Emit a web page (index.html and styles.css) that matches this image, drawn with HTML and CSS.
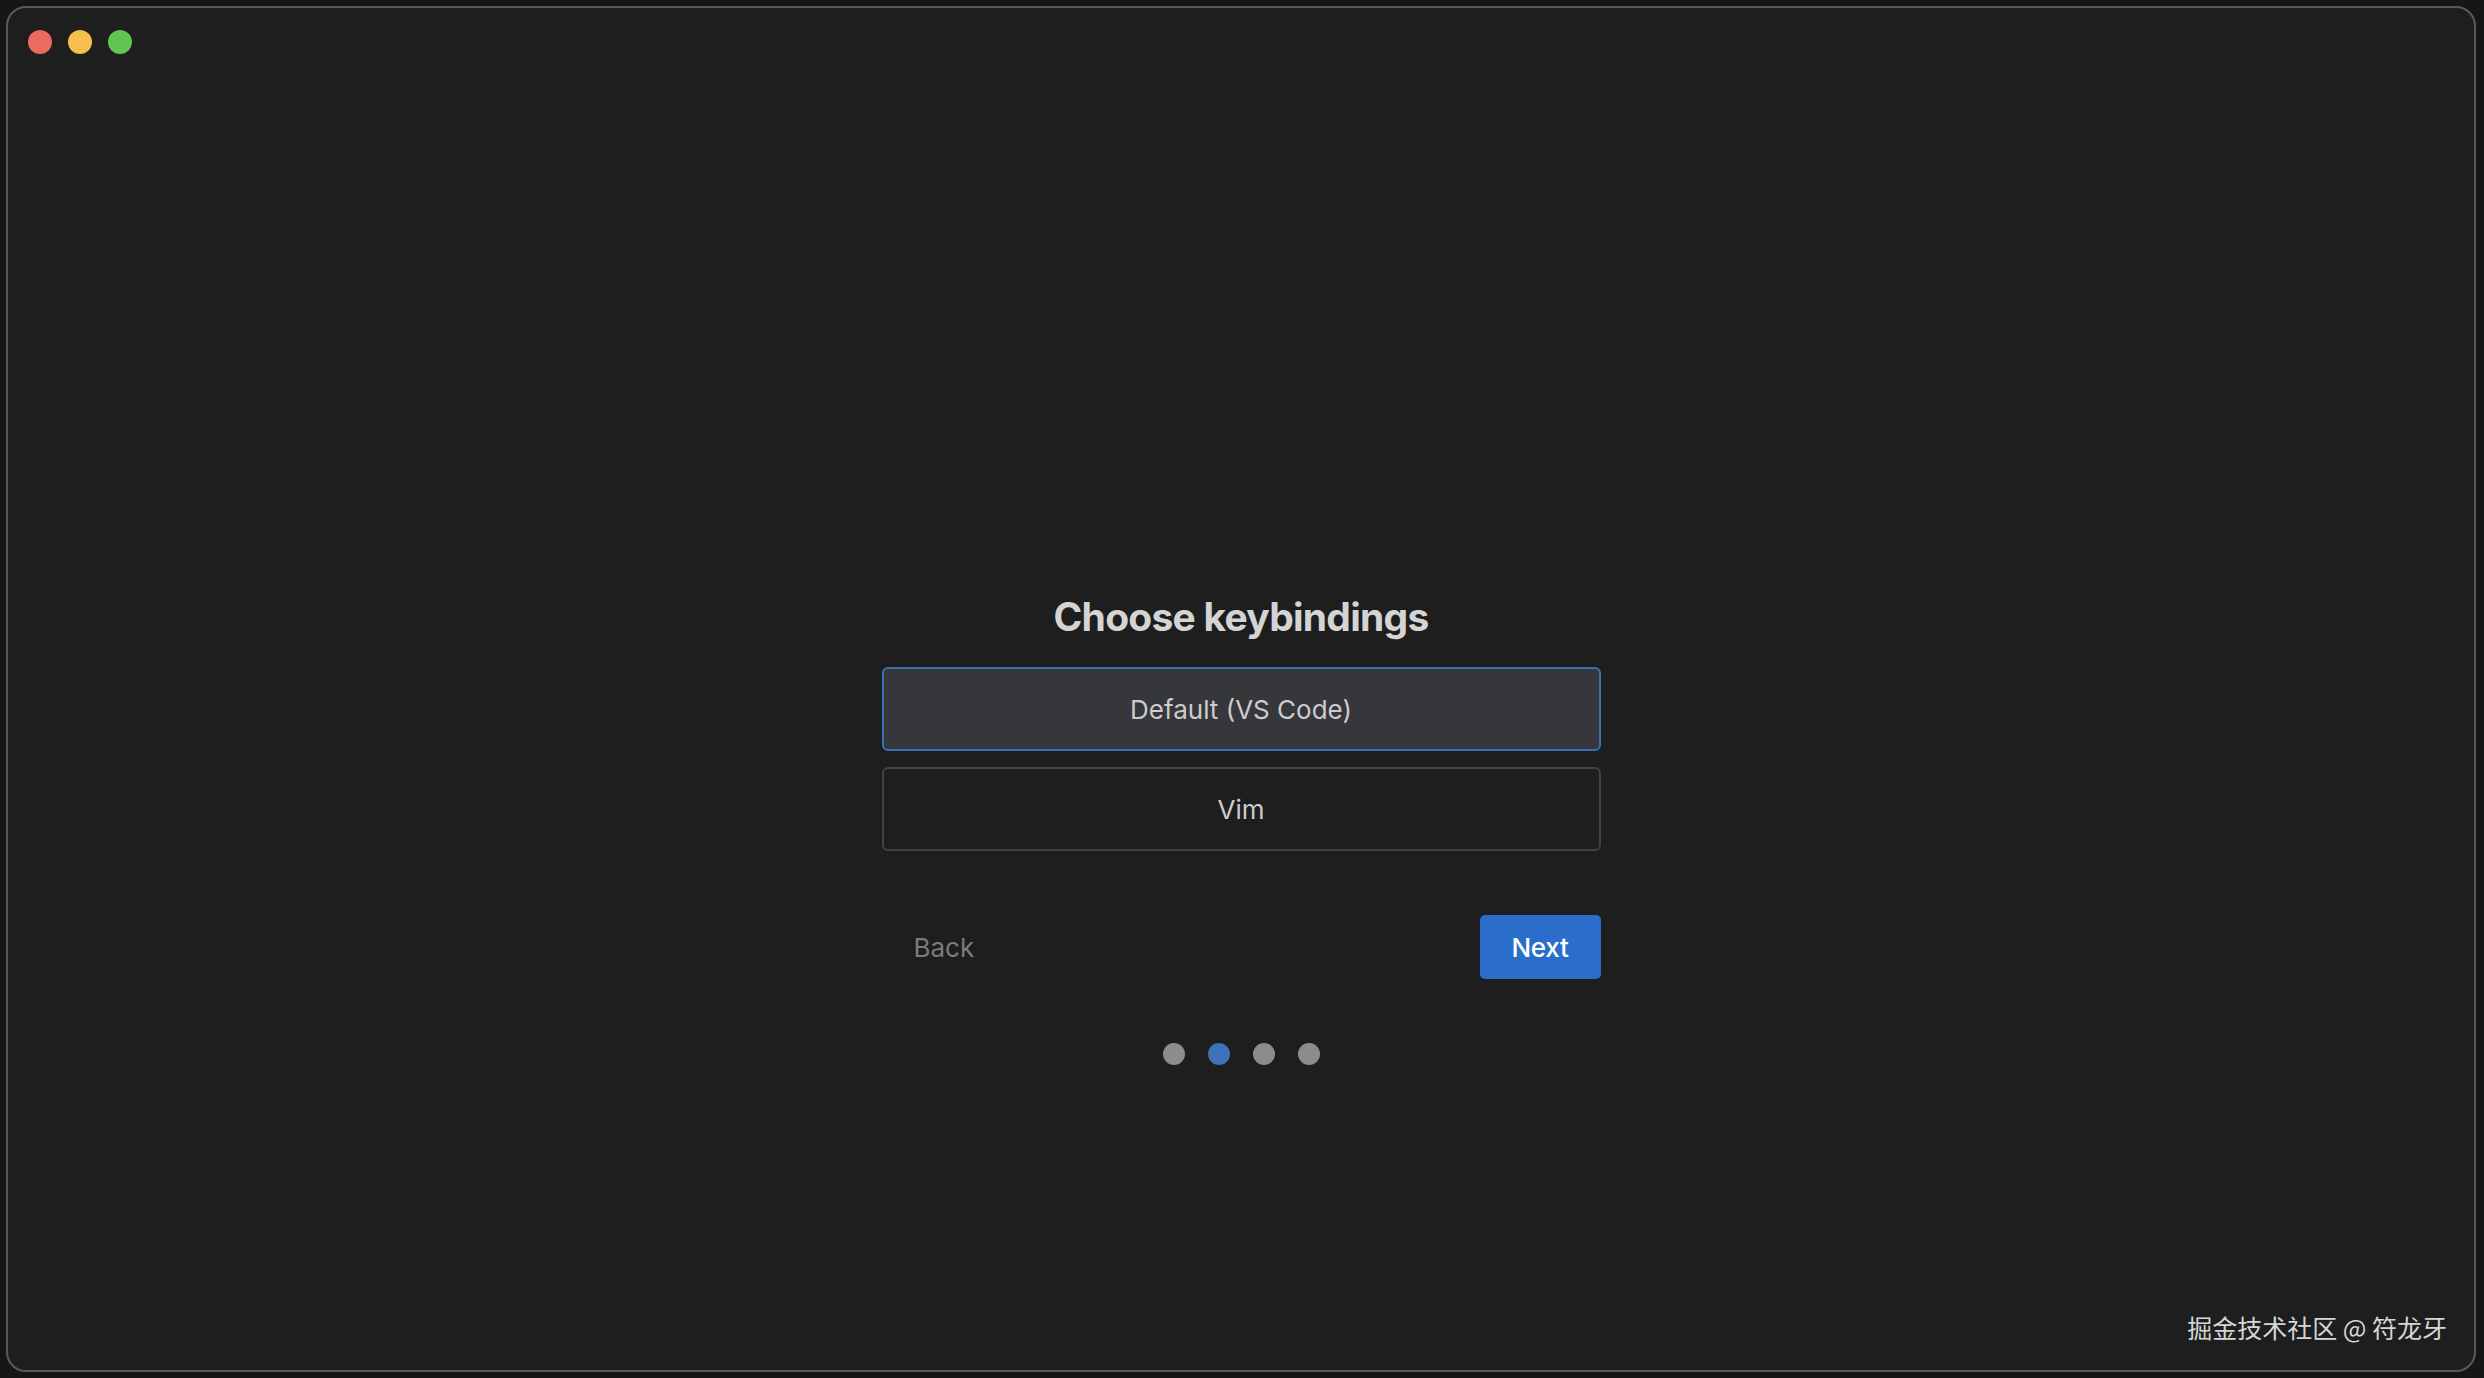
FILE: index.html
```html
<!DOCTYPE html>
<html lang="en">
<head>
<meta charset="utf-8">
<title>Choose keybindings</title>
<link rel="stylesheet" href="styles.css">
</head>
<body>
<div class="window">
  <div class="titlebar">
    <span class="light red"></span>
    <span class="light yellow"></span>
    <span class="light green"></span>
  </div>
  <main class="content">
    <h1 class="title">Choose keybindings</h1>
    <div class="options">
      <button class="option selected">Default (VS Code)</button>
      <button class="option">Vim</button>
    </div>
    <div class="actions">
      <button class="btn back">Back</button>
      <button class="btn next">Next</button>
    </div>
    <div class="dots">
      <span class="dot"></span>
      <span class="dot active"></span>
      <span class="dot"></span>
      <span class="dot"></span>
    </div>
  </main>
  <div class="watermark">掘金技术社区 @ 符龙牙</div>
</div>
</body>
</html>
```
FILE: styles.css
```css
html, body {
  margin: 0;
  padding: 0;
  height: 100%;
}
body {
  background: #161616;
  font-family: Inter, "Noto Sans", "Liberation Sans", sans-serif;
  overflow: hidden;
}
.window {
  position: relative;
  box-sizing: border-box;
  margin: 6px 8px 6px 6px;
  height: calc(100vh - 12px);
  border: 2px solid #5a5a5a;
  border-radius: 20px;
  background: #1e1e1e;
  display: flex;
  flex-direction: column;
}
.titlebar {
  display: flex;
  gap: 16px;
  padding: 22px 20px 0;
}
.light {
  width: 24px;
  height: 24px;
  border-radius: 50%;
}
.red { background: #ec6a5e; }
.yellow { background: #f4bf4f; }
.green { background: #61c554; }

.content {
  width: 719px;
  margin: 0 auto;
  padding-top: 539px;
  display: flex;
  flex-direction: column;
  align-items: stretch;
}
.title {
  margin: 0 0 26px;
  text-align: center;
  font-size: 39px;
  line-height: 48px;
  font-weight: 700;
  color: #d4d4d4;
  letter-spacing: -0.75px;
}
.options {
  display: flex;
  flex-direction: column;
  gap: 16px;
}
.option {
  box-sizing: border-box;
  height: 84px;
  border: 2px solid #424242;
  border-radius: 6px;
  background: transparent;
  color: #cccccc;
  font-family: inherit;
  font-size: 26px;
  font-weight: 400;
  cursor: pointer;
}
.option.selected {
  background: #35373b;
  border-color: #3b70b9;
}
.actions {
  margin-top: 64px;
  display: flex;
  justify-content: space-between;
  align-items: center;
}
.btn {
  height: 64px;
  padding: 0 32px;
  border: none;
  border-radius: 5px;
  font-family: inherit;
  font-size: 26px;
  cursor: pointer;
}
.back {
  background: transparent;
  color: #7b7b7b;
}
.next {
  width: 121px;
  padding: 0;
  background: #2a6dcb;
  color: #ffffff;
  font-weight: 500;
  letter-spacing: -0.3px;
}
.dots {
  margin-top: 64px;
  display: flex;
  justify-content: center;
  gap: 23px;
}
.dot {
  width: 22px;
  height: 22px;
  border-radius: 50%;
  background: #8c8c8c;
}
.dot.active {
  background: #3d72b8;
}
.watermark {
  position: absolute;
  right: 27px;
  bottom: 28px;
  font-family: "Noto Sans CJK SC", "Noto Sans", sans-serif;
  font-size: 25px;
  line-height: 30px;
  color: #d6d6d6;
}
```
